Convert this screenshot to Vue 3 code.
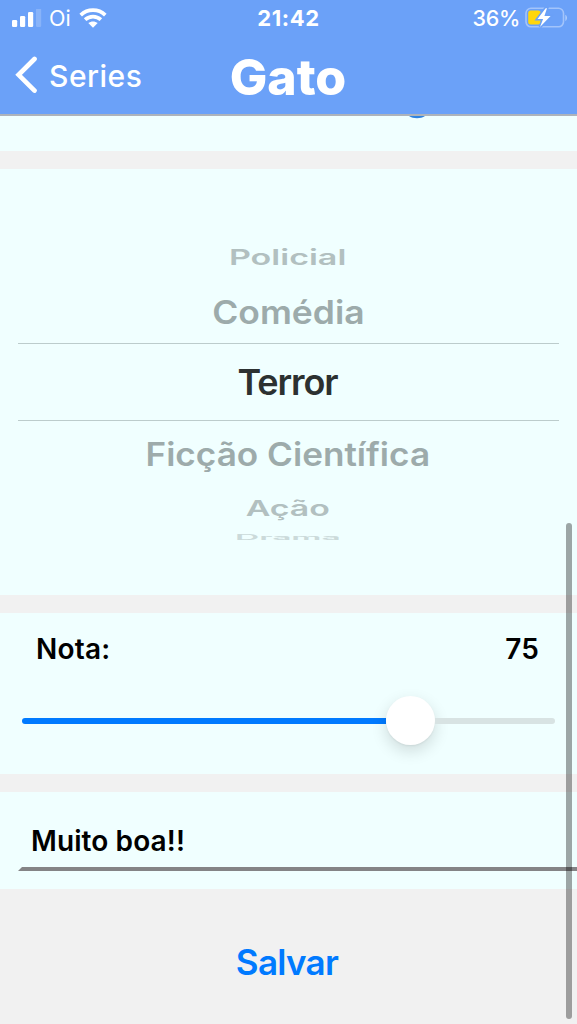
<script setup>
import { ref } from 'vue'

const genres = [
  { name: 'Policial', cls: 'far-up' },
  { name: 'Comédia', cls: 'near-up' },
  { name: 'Terror', cls: 'selected' },
  { name: 'Ficção Científica', cls: 'near-down' },
  { name: 'Ação', cls: 'far-down' },
  { name: 'Drama', cls: 'edge-down' },
]
const score = ref(75)
</script>

<template>
  <div class="screen">
    <header>
      <div class="status">
        <div class="carrier">
          <svg class="signal" width="30" height="18" viewBox="0 0 30 18">
            <g fill="#fff">
              <rect x="0" y="11" width="5.2" height="7" rx="1.3" />
              <rect x="8" y="7" width="5.2" height="11" rx="1.3" />
              <rect x="16" y="3" width="5.2" height="15" rx="1.3" />
              <rect x="24" y="-0.5" width="5.2" height="18.5" rx="1.3" opacity=".2" />
            </g>
          </svg>
          <span class="oi">Oi</span>
          <svg class="wifi" width="28" height="20" viewBox="0 0 28 20">
            <g fill="none" stroke="#fff" stroke-width="3.7">
              <path d="M1.7 7.1C8.6.5 19.4.5 26.3 7.1" />
              <path d="M6.1 11.7c4.5-4.1 11.3-4.1 15.8 0" />
            </g>
            <path d="M9.3 15.1c2.7-2.3 6.7-2.3 9.4 0L14 19.8z" fill="#fff" />
          </svg>
        </div>
        <div class="clock">21:42</div>
        <div class="power">
          <span>36%</span>
          <svg width="44" height="22" viewBox="0 0 44 22">
            <rect x="1" y="1.3" width="37.5" height="18.5" rx="5" fill="none" stroke="#fff" stroke-opacity=".38" stroke-width="1.6" />
            <path d="M40.3 7.7c2.3 1 2.3 5.2 0 6.2z" fill="#fff" opacity=".45" />
            <rect x="3.2" y="3.6" width="12.5" height="14" rx="2.5" fill="#ffd60a" />
            <path d="M20.7 1.2 12.5 12h5.6L15 20 25.6 9h-6.2L22 1.2z" fill="#fff" stroke="#6aa0f7" stroke-width="3" paint-order="stroke" />
          </svg>
        </div>
      </div>
      <div class="nav">
        <div class="back">
          <svg width="24" height="38" viewBox="0 0 24 38">
            <path d="M20.5 3 4.6 18.8l15.9 15.8" fill="none" stroke="#fff" stroke-width="4.7" stroke-linecap="round" stroke-linejoin="miter" />
          </svg>
          <span>Series</span>
        </div>
        <h1>Gato</h1>
      </div>
    </header>

    <section class="clipped">
      <svg width="16" height="3" viewBox="0 0 16 3"><path d="M0 0h16C12 3 4 3 0 0z" fill="#2f83e0" /></svg>
    </section>

    <section class="picker">
      <div v-for="g in genres" :key="g.name" class="row" :class="g.cls">
        <span>{{ g.name }}</span>
      </div>
    </section>

    <section class="rating">
      <div class="labels"><span>Nota:</span><span class="score">{{ score }}</span></div>
      <div class="slider">
        <div class="fill"></div>
        <div class="knob"></div>
        <div class="rest"></div>
      </div>
    </section>

    <section class="comment">
      <div class="field"><span>Muito boa!!</span></div>
    </section>

    <footer><span>Salvar</span></footer>
    <div class="scrollbar"></div>
  </div>
</template>

<style>
body { margin: 0; background: #f1f1f1; }
</style>

<style scoped>
.screen {
  position: relative;
  width: 577px;
  height: 1024px;
  overflow: hidden;
  display: flex;
  flex-direction: column;
  background: #f1f1f1;
  font-family: Inter, "Liberation Sans", sans-serif;
  color: #000;
  white-space: nowrap;
}
header {
  box-sizing: border-box;
  height: 116px;
  flex: none;
  background: #6ba1f8;
  border-bottom: 2px solid #adb3bb;
  color: #fff;
}
.status {
  height: 36px;
  display: grid;
  grid-template-columns: 1fr auto 1fr;
  align-items: center;
  font-size: 22px;
}
.carrier { display: flex; align-items: center; padding-left: 12px; }
.oi { margin-left: 7px; font-size: 21.5px; }
.wifi { margin-left: 8px; }
.clock { font-weight: 700; letter-spacing: .6px; }
.power { display: flex; align-items: center; justify-content: flex-end; gap: 5px; padding-right: 8px; font-weight: 500; font-size: 21.5px; letter-spacing: -.3px; }
.nav {
  height: 78px;
  display: grid;
  grid-template-columns: 1fr auto 1fr;
  align-items: center;
}
.back { display: flex; align-items: center; padding-left: 14px; gap: 11px; font-size: 30px; font-weight: 500; letter-spacing: .5px; }
.back span { margin-top: 2px; }
h1 { margin: 3px 1px 0 0; font-size: 50px; line-height: 60px; font-weight: 800; }
section { flex: none; background: #f0ffff; }
.clipped { height: 35px; padding-left: 409px; box-sizing: border-box; }
.clipped svg { display: block; }
.picker {
  height: 426px;
  box-sizing: border-box;
  margin-top: 18px;
  padding: 61px 18px 0;
  display: flex;
  flex-direction: column;
}
.row {
  flex: none;
  display: flex;
  align-items: center;
  justify-content: center;
  font-size: 36px;
  line-height: 44px;
  font-weight: 600;
  color: #9dabab;
}
.far-up { height: 54px; color: #b2c0c0; }
.far-up span { transform: translateX(-.5px) scale(.945, .6); }
.near-up { height: 56px; padding-bottom: 3px; }
.near-up span { transform: scale(.985, .9); }
.selected { height: 76px; border: solid #bccccc; border-width: 1px 0; color: #2c3131; letter-spacing: -1.1px; }
.selected span { transform: translateX(-1px); }
.near-down { height: 62px; padding-top: 2px; }
.near-down span { transform: translateX(-1px) scale(.976, .89); }
.far-down { height: 46px; color: #b2c0c0; }
.far-down span { transform: translateX(-1px) scale(.94, .6); }
.edge-down { height: 12px; color: #cbdada; }
.edge-down span { transform: translateX(-1px) scale(.93, .2); }
.rating { height: 161px; margin-top: 18px; }
.labels {
  display: flex;
  justify-content: space-between;
  padding: 18px 38px 0 36px;
  font-size: 28px;
  line-height: 36px;
  font-weight: 600;
  letter-spacing: .2px;
}
.slider { display: flex; align-items: center; margin: 29px 22px 0; height: 49px; }
.fill { width: 364px; height: 6px; border-radius: 3px 0 0 3px; background: #007aff; }
.knob { width: 49px; height: 49px; border-radius: 50%; background: #fff; box-shadow: 0 6px 16px rgba(0, 0, 0, .14), 0 1px 2px rgba(0, 0, 0, .06); }
.rest { flex: 1; height: 6px; border-radius: 0 3px 3px 0; background: #d8e3e3; }
.comment { height: 97px; margin-top: 18px; padding-left: 18px; box-sizing: border-box; }
.field {
  height: 79px;
  box-sizing: border-box;
  padding: 31px 0 0 9px;
  font-size: 28px;
  line-height: 36px;
  font-weight: 600;
  letter-spacing: .1px;
  border-bottom: 4px solid #848486;
  border-left: 4px solid transparent;
}
footer {
  flex: 1;
  display: flex;
  align-items: center;
  justify-content: center;
  padding: 11px 3px 0 0;
  font-size: 35px;
  line-height: 44px;
  font-weight: 600;
  letter-spacing: -.7px;
  color: #007aff;
}
.scrollbar {
  position: absolute;
  left: 566px;
  top: 523px;
  width: 6px;
  height: 496px;
  border-radius: 3px;
  background: rgba(0, 0, 0, .35);
}
</style>
